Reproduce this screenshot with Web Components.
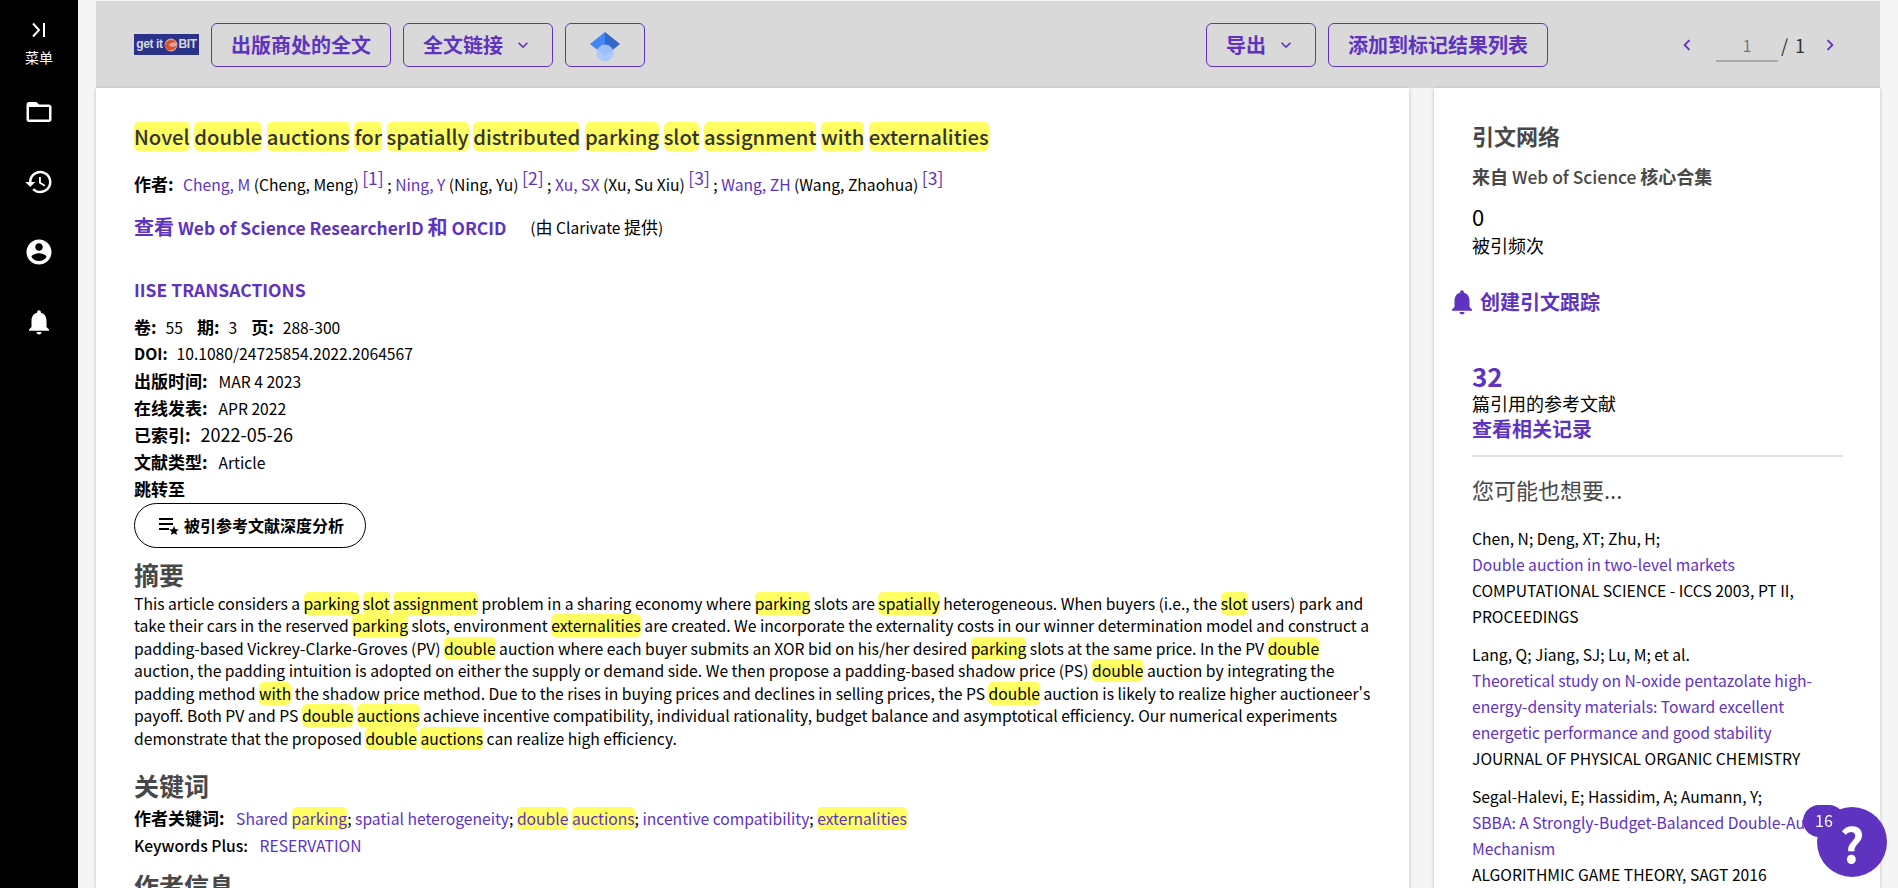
<!DOCTYPE html>
<html lang="zh">
<head>
<meta charset="utf-8">
<title>Novel double auctions</title>
<style>
  html, body { margin: 0; height: 100%; overflow: hidden; }
  body { background: #f5f5f5; font-family: "Noto Sans CJK SC", sans-serif; }
  .page { display: grid; grid-template-columns: 78px 1fr; height: 888px; }
</style>
</head>
<body>
<div class="page">
  <wos-sidebar></wos-sidebar>
  <wos-record-page></wos-record-page>
</div>
<wos-help count="16"></wos-help>

<script>
const ICONS = {
  folder: 'M20 6h-8l-2-2H4c-1.1 0-1.99.9-1.99 2L2 18c0 1.1.9 2 2 2h16c1.1 0 2-.9 2-2V8c0-1.1-.9-2-2-2zm0 12H4V8h16v10z',
  history: 'M13 3c-4.97 0-9 4.03-9 9H1l3.89 3.89.07.14L9 12H6c0-3.87 3.13-7 7-7s7 3.13 7 7-3.13 7-7 7c-1.93 0-3.68-.79-4.94-2.06l-1.42 1.42C8.27 19.99 10.51 21 13 21c4.97 0 9-4.03 9-9s-4.03-9-9-9zm-1 5v5l4.28 2.54.72-1.21-3.5-2.08V8H12z',
  account: 'M12 2C6.48 2 2 6.48 2 12s4.48 10 10 10 10-4.48 10-10S17.52 2 12 2zm0 3c1.66 0 3 1.34 3 3s-1.34 3-3 3-3-1.34-3-3 1.34-3 3-3zm0 14.2c-2.5 0-4.71-1.28-6-3.22.03-1.99 4-3.08 6-3.08 1.99 0 5.97 1.09 6 3.08-1.29 1.94-3.5 3.22-6 3.22z',
  bell: 'M12 22c1.1 0 2-.9 2-2h-4c0 1.1.89 2 2 2zm6-6v-5c0-3.07-1.64-5.64-4.5-6.32V4c0-.83-.67-1.5-1.5-1.5s-1.5.67-1.5 1.5v.68C7.63 5.36 6 7.92 6 11v5l-2 2v1h16v-1l-2-2z',
  down: 'M7.41 8.59L12 13.17l4.59-4.58L18 10l-6 6-6-6z',
  left: 'M15.41 7.41L14 6l-6 6 6 6 1.41-1.41L10.83 12z',
  right: 'M10 6L8.59 7.41 13.17 12l-4.58 4.59L10 18l6-6z'
};
const svgIcon = (name, size, color) =>
  `<svg width="${size}" height="${size}" viewBox="0 0 24 24" fill="${color}" style="display:block;flex:none"><path d="${ICONS[name]}"/></svg>`;

class WosSidebar extends HTMLElement {
  constructor() {
    super();
    this.attachShadow({ mode: 'open' });
    this.shadowRoot.innerHTML = `
      <style>
        :host { display: flex; flex-direction: column; align-items: center; background: #000; color: #fff; height: 888px; }
        .toggle { margin-top: 20px; }
        .label { font-size: 14px; line-height: 18px; margin: 8px 0 28px; }
        .item { height: 36px; display: flex; align-items: center; margin-bottom: 34px; }
      </style>
      <svg class="toggle" width="20" height="20" viewBox="0 0 20 20" fill="none" stroke="#fff" stroke-width="2"><path d="M4 3.5l6 6.5-6 6.5M15 3v14"/></svg>
      <div class="label">菜单</div>
      <div class="item">${svgIcon('folder', 30, '#fff')}</div>
      <div class="item">${svgIcon('history', 30, '#fff')}</div>
      <div class="item">${svgIcon('account', 30, '#fff')}</div>
      <div class="item">${svgIcon('bell', 30, '#fff')}</div>
    `;
  }
}

class WosButton extends HTMLElement {
  constructor() {
    super();
    this.attachShadow({ mode: 'open' });
    this.shadowRoot.innerHTML = `
      <style>
        :host {
          display: inline-flex; align-items: center; justify-content: center; gap: 10px;
          height: 44px; box-sizing: border-box; padding: 0 19px;
          border: 1px solid #5e33bf; border-radius: 6px;
          color: #5e33bf; font-size: 20px; font-weight: 700; white-space: nowrap;
        }
      </style>
      <slot></slot>
    `;
  }
}

class WosToolbar extends HTMLElement {
  constructor() {
    super();
    this.attachShadow({ mode: 'open' });
    this.shadowRoot.innerHTML = `
      <style>
        :host {
          display: flex; align-items: center; height: 87px; margin-top: 1px;
          background: #d9d9d9; padding: 0 39px 0 38px; box-sizing: border-box;
        }
        .logo {
          width: 65px; height: 21px; background: #2b3388; color: #d8d8e4; margin-right: 12px;
          display: flex; align-items: center; justify-content: center;
          font: 700 12px/21px "Liberation Sans", sans-serif; letter-spacing: -.4px;
        }
        .group { display: flex; gap: 12px; }
        .group.push { margin-left: auto; }
        .pager { display: flex; align-items: center; margin-left: 128px; color: #333; font-size: 18px; }
        .page-box { width: 62px; height: 30px; margin: 4px 3px 0 18px; box-sizing: border-box; border-bottom: 2px solid #a8a8a8; text-align: center; color: #777; font-size: 15.6px; line-height: 26px; }
        .total { width: 24px; white-space: nowrap; word-spacing: 3px; }
      </style>
      <div class="logo"><span>get it</span><svg width="16" height="16" viewBox="0 0 14 14"><circle cx="7" cy="7" r="5.6" fill="#d9a79c"/><path d="M1.6 8c1 4.4 8.4 5.4 10.8-1-2 2.2-5.4 2.2-7.4 0 1-2 4.4-3.2 6.4-2C9 .8 2.6 2 1.6 8z" fill="#d9502c"/></svg><span>BIT</span></div>
      <div class="group">
        <wos-button>出版商处的全文</wos-button>
        <wos-button>全文链接 ${svgIcon('down', 20, '#5e33bf')}</wos-button>
        <wos-button style="width:80px;padding:0">
          <svg width="32" height="36" viewBox="0 0 32 36" style="display:block"><path d="M16 5L1 17l15 12z" fill="#4285f4"/><path d="M16 5l15 12-15 12z" fill="#3367c8"/><circle cx="16" cy="26" r="8.5" fill="#a6c6ff" opacity=".9"/></svg>
        </wos-button>
      </div>
      <div class="group push">
        <wos-button>导出 ${svgIcon('down', 20, '#5e33bf')}</wos-button>
        <wos-button>添加到标记结果列表</wos-button>
      </div>
      <div class="pager">
        ${svgIcon('left', 22, '#5e33bf')}
        <div class="page-box">1</div>
        <span class="total">/ 1</span>
        <span style="width:14px"></span>
        ${svgIcon('right', 22, '#5e33bf')}
      </div>
    `;
  }
}

class WosMain extends HTMLElement {
  constructor() {
    super();
    this.attachShadow({ mode: 'open' });
    this.shadowRoot.innerHTML = `
      <style>
        :host {
          display: block; background: #fff; box-shadow: 0 1px 4px rgba(0,0,0,.22);
          padding: 35px 34px 0 38px; color: #000; font-size: 15.66px; line-height: 22.5px;
          overflow: hidden;
        }
        a { color: #5e33bf; text-decoration: none; }
        b { font-weight: 700; }
        mark { background: #ffff64; color: inherit; border-radius: 5px; }
        h1 { margin: 0; font-size: 20.25px; line-height: 28px; font-weight: 500; color: #333; }
        h2 { margin: 0; font-size: 25px; line-height: 34px; font-weight: 700; color: #484848; }
        sup { font-size: 17.5px; line-height: 0; }
        .authors { margin-top: 22px; }
        .authors b { margin-right: 6px; font-size: 17px; }
        .rid { margin-top: 19px; font-size: 17.4px; display: flex; align-items: center; gap: 24px; }
        .rid a { font-weight: 700; }
        .rid a i { font-style: normal; font-size: 20px; }
        .rid span { font-size: 15.66px; }
        .rid span i { font-style: normal; font-size: 17px; }
        .journal { margin-top: 40px; font-size: 17.5px; font-weight: 700; color: #5e33bf; }
        .meta { height: 27px; line-height: 27px; }
        .meta b { font-size: 17px; margin-right: 11px; }
        .meta.first { margin-top: 11px; }
        .meta.first b { margin-right: 9px; }
        .meta.first span { margin-right: 14px; }
        .jump { margin-top: 1px; font-size: 17px; font-weight: 700; line-height: 26px; }
        .analysis {
          display: flex; align-items: center; justify-content: center; gap: 4px;
          width: 232px; height: 45px; box-sizing: border-box; margin-top: 1px;
          border: 1px solid #000; border-radius: 23px; font-size: 16px; font-weight: 700;
        }
        .abstract-title { margin-top: 9px; }
        .abstract { margin: 2px 0 0; max-width: 1241px; }
        .kw-title { margin-top: 18px; }
        .kw { margin-top: 5px; }
        .kw b { margin-right: 8px; font-size: 17px; }
        .kw + .kw { margin-top: 4px; }
        .kw + .kw b { font-size: 15.66px; font-weight: 500; }
        .info-title { margin-top: 11px; }
      </style>
      <h1><mark>Novel</mark> <mark>double</mark> <mark>auctions</mark> <mark>for</mark> <mark>spatially</mark> <mark>distributed</mark> <mark>parking</mark> <mark>slot</mark> <mark>assignment</mark> <mark>with</mark> <mark>externalities</mark></h1>
      <div class="authors"><b>作者:</b> <a>Cheng, M</a> (Cheng, Meng) <sup><a>[1]</a></sup> ; <a>Ning, Y</a> (Ning, Yu) <sup><a>[2]</a></sup> ; <a>Xu, SX</a> (Xu, Su Xiu) <sup><a>[3]</a></sup> ; <a>Wang, ZH</a> (Wang, Zhaohua) <sup><a>[3]</a></sup></div>
      <div class="rid"><a><i>查看</i> Web of Science ResearcherID <i>和</i> ORCID</a><span>(<i>由</i> Clarivate <i>提供</i>)</span></div>
      <div class="journal">IISE TRANSACTIONS</div>
      <div class="meta first"><b>卷:</b><span>55</span><b>期:</b><span>3</span><b>页:</b>288-300</div>
      <div class="meta"><b style="font-size:15.66px;margin-right:9px">DOI:</b>10.1080/24725854.2022.2064567</div>
      <div class="meta"><b>出版时间:</b>MAR 4 2023</div>
      <div class="meta"><b>在线发表:</b>APR 2022</div>
      <div class="meta"><b style="margin-right:10px">已索引:</b><span style="font-size:18px">2022-05-26</span></div>
      <div class="meta"><b>文献类型:</b>Article</div>
      <div class="jump">跳转至</div>
      <div class="analysis">
        <svg width="24" height="22" viewBox="0 0 24 22" style="display:block"><path d="M3 4h14v2H3zM3 9h14v2H3zM3 14h10v2H3z" fill="#000"/><path d="M18 12l1.4 3.2 3.4.3-2.6 2.2.8 3.3-3-1.8-3 1.8.8-3.3-2.6-2.2 3.4-.3z" fill="#000"/></svg>
        被引参考文献深度分析
      </div>
      <h2 class="abstract-title">摘要</h2>
      <p class="abstract">This article considers a <mark>parking</mark> <mark>slot</mark> <mark>assignment</mark> problem in a sharing economy where <mark>parking</mark> slots are <mark>spatially</mark> heterogeneous. When buyers (i.e., the <mark>slot</mark> users) park and take their cars in the reserved <mark>parking</mark> slots, environment <mark>externalities</mark> are created. We incorporate the externality costs in our winner determination model and construct a padding-based Vickrey-Clarke-Groves (PV) <mark>double</mark> auction where each buyer submits an XOR bid on his/her desired <mark>parking</mark> slots at the same price. In the PV <mark>double</mark> auction, the padding intuition is adopted on either the supply or demand side. We then propose a padding-based shadow price (PS) <mark>double</mark> auction by integrating the padding method <mark>with</mark> the shadow price method. Due to the rises in buying prices and declines in selling prices, the PS <mark>double</mark> auction is likely to realize higher auctioneer's payoff. Both PV and PS <mark>double</mark> <mark>auctions</mark> achieve incentive compatibility, individual rationality, budget balance and asymptotical efficiency. Our numerical experiments demonstrate that the proposed <mark>double</mark> <mark>auctions</mark> can realize high efficiency.</p>
      <h2 class="kw-title">关键词</h2>
      <div class="kw"><b>作者关键词:</b> <a>Shared <mark>parking</mark></a>; <a>spatial heterogeneity</a>; <a><mark>double</mark> <mark>auctions</mark></a>; <a>incentive compatibility</a>; <a><mark>externalities</mark></a></div>
      <div class="kw"><b>Keywords Plus:</b> <a>RESERVATION</a></div>
      <h2 class="info-title">作者信息</h2>
    `;
  }
}

class WosRelated extends HTMLElement {
  constructor() {
    super();
    this.attachShadow({ mode: 'open' });
    this.shadowRoot.innerHTML = `
      <style>
        :host {
          display: block; background: #fff; box-shadow: 0 1px 4px rgba(0,0,0,.22);
          padding: 31px 37px 0 38px; color: #000; font-size: 15.66px; line-height: 26px; overflow: hidden;
        }
        a { color: #5e33bf; text-decoration: none; }
        h3 { margin: 0; font-size: 22px; line-height: 32px; font-weight: 700; color: #484848; }
        .src { margin-top: 11px; font-size: 17.4px; line-height: 28px; font-weight: 500; color: #484848; }
        .src b { font-weight: 700; font-size: 18px; }
        .count { margin-top: 11px; font-size: 22px; line-height: 28px; }
        .count + .ref { margin-top: 2px; }
        .ref { font-size: 18px; line-height: 26px; }
        .track { display: flex; align-items: center; margin: 29px 0 0 -25px; gap: 3px; font-size: 20px; font-weight: 700; color: #5e33bf; line-height: 28px; }
        .num { margin-top: 44px; font-size: 26px; line-height: 29px; font-weight: 700; color: #5e33bf; }
        .more { margin-top: -1px; font-size: 20px; line-height: 28px; font-weight: 700; color: #5e33bf; }
        hr { margin: 12px 0 0; border: 0; border-top: 2px solid #e0e0e0; }
        .like { margin-top: 15px; font-size: 22px; line-height: 34px; color: #484848; }
        .paper { margin-top: 12px; }
        .like + .paper { margin-top: 20px; }
        .paper a { display: block; }
      </style>
      <h3>引文网络</h3>
      <div class="src"><b>来自</b> Web of Science <b>核心合集</b></div>
      <div class="count">0</div>
      <div class="ref">被引频次</div>
      <div class="track">${svgIcon('bell', 30, '#5e33bf')}创建引文跟踪</div>
      <div class="num">32</div>
      <div class="ref">篇引用的参考文献</div>
      <div class="more">查看相关记录</div>
      <hr>
      <div class="like">您可能也想要...</div>
      <div class="paper">Chen, N; Deng, XT; Zhu, H;<a>Double auction in two-level markets</a>COMPUTATIONAL SCIENCE - ICCS 2003, PT II, PROCEEDINGS</div>
      <div class="paper">Lang, Q; Jiang, SJ; Lu, M; et al.<a>Theoretical study on N-oxide pentazolate high-energy-density materials: Toward excellent energetic performance and good stability</a>JOURNAL OF PHYSICAL ORGANIC CHEMISTRY</div>
      <div class="paper">Segal-Halevi, E; Hassidim, A; Aumann, Y;<a>SBBA: A Strongly-Budget-Balanced Double-Auction Mechanism</a>ALGORITHMIC GAME THEORY, SAGT 2016</div>
    `;
  }
}

class WosRecordPage extends HTMLElement {
  constructor() {
    super();
    this.attachShadow({ mode: 'open' });
    this.shadowRoot.innerHTML = `
      <style>
        :host { display: flex; flex-direction: column; height: 888px; padding: 0 18px; box-sizing: border-box; overflow: hidden; }
        .cols { display: grid; grid-template-columns: 1313px 446px; column-gap: 25px; flex: 1; min-height: 0; }
      </style>
      <wos-toolbar></wos-toolbar>
      <div class="cols">
        <wos-main></wos-main>
        <wos-related></wos-related>
      </div>
    `;
  }
}

class WosHelp extends HTMLElement {
  constructor() {
    super();
    this.attachShadow({ mode: 'open' });
    this.shadowRoot.innerHTML = `
      <style>
        :host { position: fixed; left: 1803px; top: 805px; width: 84px; height: 72px; font-family: "Noto Sans CJK SC", sans-serif; }
        .circle { position: absolute; right: 0; bottom: 0; width: 70px; height: 70px; border-radius: 50%; background: #5e33bf; color: #fff; font-size: 48px; font-weight: 700; line-height: 70px; text-align: center; }
        .badge { position: absolute; left: 0; top: 0; width: 42px; height: 32px; border-radius: 16px; background: #5e33bf; color: #fff; font-size: 16px; line-height: 30px; text-align: center; }
      </style>
      <div class="circle">?</div>
      <div class="badge">${this.getAttribute('count')}</div>
    `;
  }
}

customElements.define('wos-sidebar', WosSidebar);
customElements.define('wos-button', WosButton);
customElements.define('wos-toolbar', WosToolbar);
customElements.define('wos-main', WosMain);
customElements.define('wos-related', WosRelated);
customElements.define('wos-record-page', WosRecordPage);
customElements.define('wos-help', WosHelp);
</script>
</body>
</html>
